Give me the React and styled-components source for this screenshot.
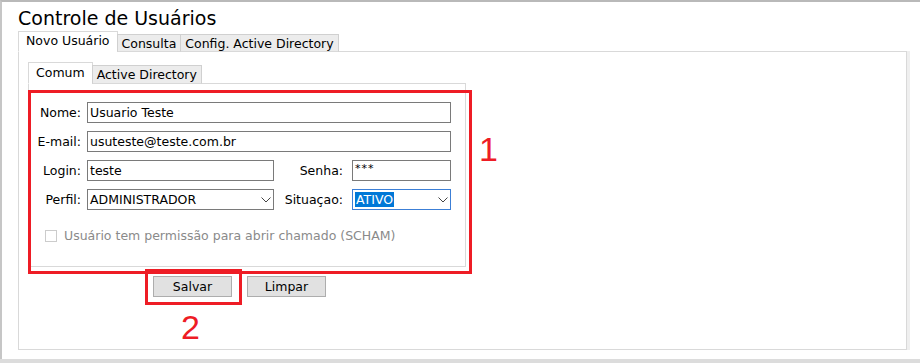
import React from 'react';
import styled, { createGlobalStyle } from 'styled-components';

const Global = createGlobalStyle`
  html, body { margin: 0; padding: 0; background: #fff; }
  body { font-family: "DejaVu Sans", Verdana, sans-serif; }
`;

const Screen = styled.div`
  position: relative;
  width: 920px;
  height: 363px;
  overflow: hidden;
  background: #fff;
  display: flex;
  flex-direction: column;
`;

const Frame = styled.div`
  flex: 1;
  border-top: 2px solid #b9b9b9;
  border-left: 2px solid #c6c6c6;
  padding: 0 13px 9px 16px;
  display: flex;
  flex-direction: column;
`;

const BottomBand = styled.div`
  height: 4px;
  background: #dcdcdc;
`;

const Title = styled.h1`
  margin: 4px 0 2px 0;
  font-size: 19px;
  line-height: 24px;
  font-weight: normal;
  color: #000;
`;

const TabStrip = styled.div`
  display: flex;
  align-items: flex-end;
  height: ${(p) => p.$h}px;
  position: relative;
  z-index: 1;
  margin-bottom: -1px;
`;

const Tab = styled.div`
  box-sizing: border-box;
  font-size: 12.5px;
  color: #000;
  padding: 0 ${(p) => (p.$active ? 7 : 4)}px;
  height: ${(p) => (p.$active ? p.$h + 1 : p.$h - 2)}px;
  line-height: ${(p) => (p.$active ? p.$h - 2 : p.$h - 3)}px;
  border: 1px solid ${(p) => (p.$active ? '#d9d9d9' : '#d0d0d0')};
  border-bottom: ${(p) => (p.$active ? '1px solid #fff' : '1px solid #d9d9d9')};
  background: ${(p) => (p.$active ? '#fff' : '#ececec')};
  margin-left: ${(p) => (p.$first ? 0 : -1)}px;
  white-space: nowrap;
`;

const Panel = styled.div`
  position: relative;
  flex: ${(p) => (p.$grow ? 1 : 'none')};
  border: 1px solid #d9d9d9;
  box-shadow: ${(p) => (p.$grow ? '3px 0 0 #efefef' : 'none')};
  background: #fff;
  padding: ${(p) => p.$pad};
  width: ${(p) => (p.$w ? `${p.$w}px` : 'auto')};
  height: ${(p) => (p.$hh ? `${p.$hh}px` : 'auto')};
  box-sizing: border-box;
`;

const FormGrid = styled.div`
  display: grid;
  grid-template-columns: 53px 187px 78px 99px;
  grid-auto-rows: 21px;
  row-gap: 8px;
  align-items: center;
`;

const Label = styled.label`
  font-size: 12.5px;
  color: #000;
  text-align: right;
  padding-right: ${(p) => p.$pr}px;
  white-space: nowrap;
`;

const Input = styled.div`
  box-sizing: border-box;
  height: 21px;
  border: 1px solid ${(p) => (p.$focus ? '#3c7fd6' : '#7a7a7a')};
  grid-column: ${(p) => (p.$wide ? 'span 3' : 'auto')};
  font-size: 12.5px;
  line-height: 19px;
  padding: 0 2px;
  color: #000;
  background: #fff;
  display: flex;
  align-items: center;
  justify-content: space-between;
  white-space: nowrap;
`;

const Stars = styled.span`
  font-size: 11px;
  line-height: 11px;
  align-self: flex-start;
  margin-top: 2px;
  letter-spacing: 1px;
`;

const Selected = styled.span`
  background: #0078d7;
  color: #fff;
  line-height: 15px;
  padding: 0 1px;
`;

const CheckRow = styled.div`
  display: flex;
  align-items: center;
  gap: 7px;
  margin: 18px 0 0 11px;
  color: #8a8a8a;
  font-size: 12.5px;
`;

const Box = styled.span`
  width: 12px;
  height: 12px;
  box-sizing: border-box;
  border: 1px solid #cccccc;
  background: #fff;
`;

const ButtonRow = styled.div`
  display: flex;
  gap: 15px;
  margin: 9px 0 0 125px;
`;

const Button = styled.button`
  width: 79px;
  height: 21px;
  box-sizing: border-box;
  border: 1px solid #adadad;
  background: #e1e1e1;
  font-family: inherit;
  font-size: 12.5px;
  color: #000;
  padding: 0;
`;

const Highlight = styled.div`
  position: absolute;
  left: ${(p) => p.$x}px;
  top: ${(p) => p.$y}px;
  width: ${(p) => p.$w}px;
  height: ${(p) => p.$h}px;
  box-sizing: border-box;
  border: 3px solid #ee1c25;
  pointer-events: none;
`;

const Mark = styled.div`
  position: absolute;
  left: ${(p) => p.$x}px;
  top: ${(p) => p.$y}px;
  color: #ee1c25;
  font-family: "Liberation Sans", Arial, sans-serif;
  font-size: 34px;
  line-height: 34px;
`;

const Chevron = () => (
  <svg width="10" height="6" viewBox="0 0 10 6">
    <path d="M0.5 0.5 L5 5 L9.5 0.5" fill="none" stroke="#444" strokeWidth="1" />
  </svg>
);

export default function App() {
  return (
    <Screen>
      <Global />
      <Frame>
        <Title>Controle de Usuários</Title>
        <TabStrip $h={20}>
          <Tab $active $first $h={20}>Novo Usuário</Tab>
          <Tab $h={20}>Consulta</Tab>
          <Tab $h={20}>Config. Active Directory</Tab>
        </TabStrip>
        <Panel $grow $pad="11px 0 0 9px">
          <TabStrip $h={21}>
            <Tab $active $first $h={21}>Comum</Tab>
            <Tab $h={21}>Active Directory</Tab>
          </TabStrip>
          <Panel $w={438} $hh={184} $pad="18px 0 0 5px">
            <FormGrid>
              <Label $pr={6}>Nome:</Label>
              <Input $wide>Usuario Teste</Input>
              <Label $pr={6}>E-mail:</Label>
              <Input $wide>usuteste@teste.com.br</Input>
              <Label $pr={6}>Login:</Label>
              <Input>teste</Input>
              <Label $pr={9}>Senha:</Label>
              <Input><Stars>***</Stars></Input>
              <Label $pr={6}>Perfil:</Label>
              <Input>ADMINISTRADOR<Chevron /></Input>
              <Label $pr={9}>Situaçao:</Label>
              <Input $focus><Selected>ATIVO</Selected><Chevron /></Input>
            </FormGrid>
            <CheckRow>
              <Box />
              <span>Usuário tem permissão para abrir chamado (SCHAM)</span>
            </CheckRow>
          </Panel>
          <ButtonRow>
            <Button>Salvar</Button>
            <Button>Limpar</Button>
          </ButtonRow>
          <Highlight $x={9} $y={38} $w={444} $h={184} />
          <Highlight $x={126} $y={217} $w={97} $h={36} />
          <Mark $x={460} $y={80}>1</Mark>
          <Mark $x={162} $y={258}>2</Mark>
        </Panel>
      </Frame>
      <BottomBand />
    </Screen>
  );
}
